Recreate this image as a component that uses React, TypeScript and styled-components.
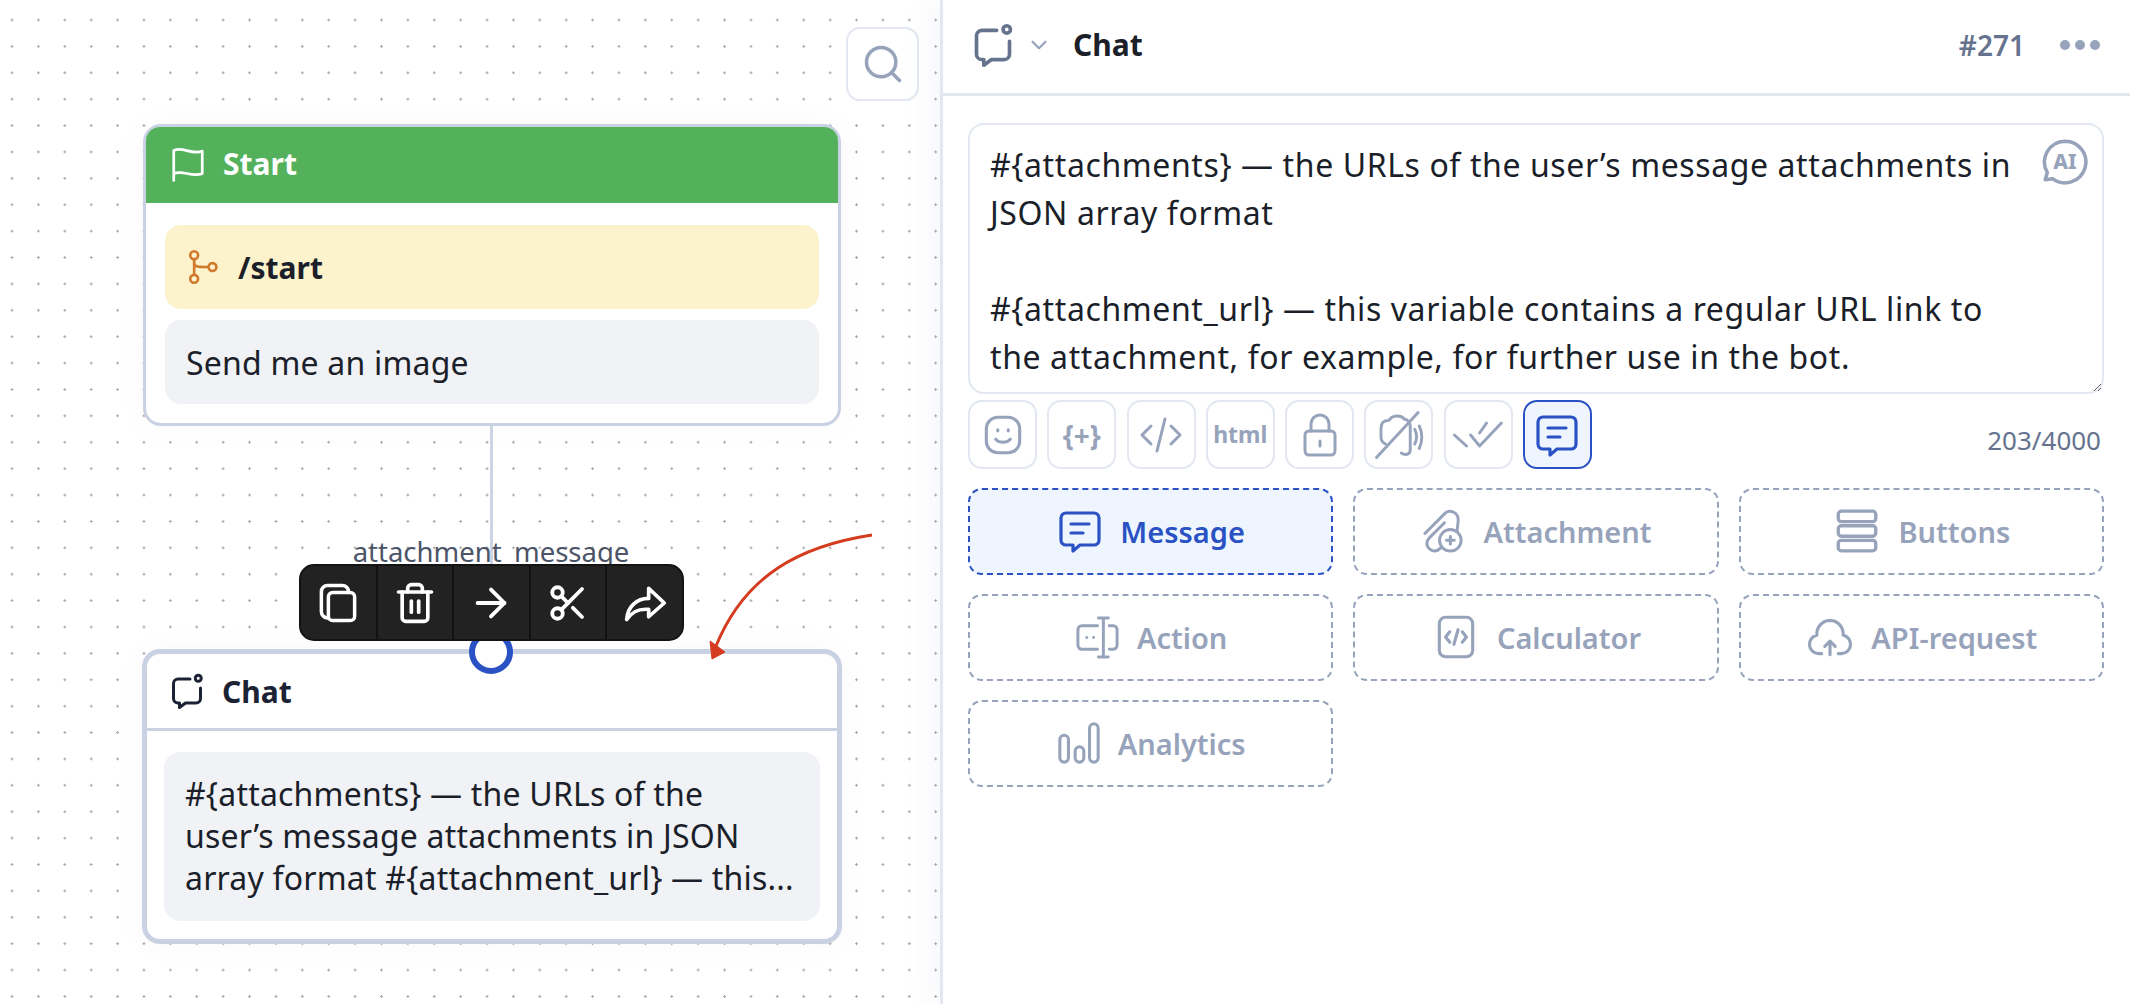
import React from "react";
import styled, { createGlobalStyle } from "styled-components";
import { ArrowRight, ChevronDown, Scissors, Search, Trash2 } from "lucide-react";

const FONT = `"Noto Sans", "Open Sans", sans-serif`;

const GlobalStyle = createGlobalStyle`
  html, body {
    margin: 0;
    padding: 0;
    background: #fff;
    font-family: ${FONT};
    color: #1b1f2a;
  }
  * {
    box-sizing: border-box;
  }
`;

const Page = styled.div`
  display: flex;
  width: 100%;
  height: 100vh;
  overflow: hidden;
`;

const Canvas = styled.div`
  position: relative;
  flex: 0 0 940px;
  height: 100%;
  background-color: #fff;
  background-image: radial-gradient(circle, #a9a9a9 1px, transparent 1.4px);
  background-size: 26.4px 26.4px;
  background-position: -1.2px 6.8px;
`;

const SearchButton = styled.div`
  position: absolute;
  left: 846px;
  top: 27px;
  width: 73px;
  height: 74px;
  display: flex;
  align-items: center;
  justify-content: center;
  background: #fff;
  border: 2px solid #e2e7f1;
  border-radius: 14px;
  color: #97a3bb;
`;

const Node = styled.div<{ $x: number; $y: number; $w: number; $h: number; $border: number }>`
  position: absolute;
  left: ${(p) => p.$x}px;
  top: ${(p) => p.$y}px;
  width: ${(p) => p.$w}px;
  height: ${(p) => p.$h}px;
  display: flex;
  flex-direction: column;
  background: #fff;
  border: ${(p) => p.$border}px solid #c8d2e2;
  border-radius: 18px;
  box-shadow: 0 0 30px rgba(90, 110, 150, 0.04);
`;

const StartHeader = styled.div`
  flex: 0 0 76px;
  display: flex;
  align-items: center;
  gap: 17px;
  padding: 0 24px 3px;
  background: #54b15b;
  border-radius: 14px 14px 0 0;
  color: #fff;
  font-size: 30px;
  font-weight: 700;
`;

const NodeBody = styled.div<{ $pad: string }>`
  display: flex;
  flex-direction: column;
  gap: 11px;
  padding: ${(p) => p.$pad};
`;

const Block = styled.div<{ $tone: "yellow" | "gray" }>`
  display: flex;
  align-items: center;
  gap: 20px;
  height: 84px;
  padding: 0 21px;
  border-radius: 16px;
  font-size: ${(p) => (p.$tone === "yellow" ? 30 : 32)}px;
  letter-spacing: ${(p) => (p.$tone === "yellow" ? 0 : 0.2)}px;
  font-weight: ${(p) => (p.$tone === "yellow" ? 700 : 400)};
  background: ${(p) => (p.$tone === "yellow" ? "#fcf2cb" : "#f0f2f6")};
`;

const ChatHeader = styled.div`
  flex: 0 0 77px;
  display: flex;
  align-items: center;
  gap: 17px;
  padding: 0 22px;
  border-bottom: 3px solid #c8d2e2;
  font-size: 30px;
  font-weight: 700;
  color: #1b2233;
`;

const PreviewBox = styled.div`
  height: 169px;
  padding: 21px 21px;
  border-radius: 16px;
  background: #f0f2f6;
  font-size: 32px;
  line-height: 42px;
  letter-spacing: 0.2px;
  font-weight: 400;
`;

const Connector = styled.div`
  position: absolute;
  left: 490px;
  top: 426px;
  width: 3px;
  height: 140px;
  background: #ccd5e5;
`;

const EdgeLabel = styled.div`
  position: absolute;
  left: 341px;
  top: 534px;
  width: 300px;
  text-align: center;
  font-size: 27.5px;
  line-height: 36px;
  color: #4b5567;
`;

const FloatBar = styled.div`
  position: absolute;
  left: 299px;
  top: 564px;
  width: 385px;
  height: 77px;
  display: flex;
  background: #222;
  border: 2px solid #141414;
  border-radius: 15px;
  z-index: 2;
`;

const FloatButton = styled.div`
  flex: 1;
  display: flex;
  align-items: center;
  justify-content: center;
  color: #fff;
  & + & {
    border-left: 2px solid #111;
  }
`;

const Port = styled.div`
  position: absolute;
  left: 469px;
  top: 630px;
  width: 44px;
  height: 44px;
  border: 6px solid #2a52c4;
  border-radius: 50%;
  background: #fff;
  z-index: 1;
`;

const RedArrow = styled.svg`
  position: absolute;
  left: 700px;
  top: 530px;
`;

const Panel = styled.div`
  flex: 1;
  display: flex;
  flex-direction: column;
  height: 100%;
  background: #fff;
  border-left: 3px solid #e2e7f1;
  box-shadow: -14px 0 24px rgba(120, 140, 180, 0.05);
  z-index: 3;
`;

const PanelHeader = styled.div`
  flex: 0 0 96px;
  display: flex;
  align-items: center;
  padding: 0 29px 4px 28px;
  border-bottom: 3px solid #e2e7f1;
  color: #66738f;
`;

const PanelTitle = styled.div`
  margin-left: 21px;
  font-size: 30px;
  font-weight: 700;
  color: #1b1f2a;
`;

const ChevronWrap = styled.div`
  display: flex;
  margin-left: 11px;
  color: #97a3bb;
`;

const HeaderId = styled.div`
  margin-left: auto;
  font-size: 28px;
  font-weight: 600;
  color: #66738f;
`;

const HeaderMenu = styled.div`
  display: flex;
  margin-left: 34px;
  color: #97a3bb;
`;

const PanelBody = styled.div`
  display: flex;
  flex-direction: column;
  padding: 27px 26px 0 25px;
`;

const EditorWrap = styled.div`
  position: relative;
  display: flex;
`;

const Editor = styled.textarea`
  width: 100%;
  height: 271px;
  padding: 16px 20px;
  border: 2px solid #e2e7f1;
  border-radius: 16px;
  outline: none;
  overflow: hidden;
  resize: vertical;
  font-family: ${FONT};
  font-size: 32px;
  line-height: 48px;
  letter-spacing: 0.6px;
  color: #1b1f2a;
  background: #fff;
`;

const AiBadge = styled.div`
  position: absolute;
  top: 14px;
  right: 14px;
  display: flex;
  color: #97a3bb;
`;

const ToolRow = styled.div`
  display: flex;
  align-items: center;
  gap: 10.25px;
  margin-top: 6px;
`;

const ToolButton = styled.div<{ $active?: boolean }>`
  width: 69px;
  height: 69px;
  display: flex;
  align-items: center;
  justify-content: center;
  border: 2px solid ${(p) => (p.$active ? "#2a52c4" : "#e2e7f1")};
  border-radius: 14px;
  background: ${(p) => (p.$active ? "#eef5fe" : "#fff")};
  color: ${(p) => (p.$active ? "#2a52c4" : "#97a3bb")};
`;

const ToolText = styled.span<{ $size: number }>`
  font-size: ${(p) => p.$size}px;
  font-weight: 700;
  line-height: 1;
`;

const Counter = styled.div`
  margin-left: auto;
  padding: 10px 3px 0 0;
  font-size: 26px;
  color: #66738f;
`;

const ActionGrid = styled.div`
  display: grid;
  grid-template-columns: repeat(3, 1fr);
  grid-auto-rows: 87px;
  column-gap: 20px;
  row-gap: 19px;
  margin-top: 19px;
`;

const ActionCard = styled.div<{ $active?: boolean }>`
  display: flex;
  align-items: center;
  justify-content: center;
  gap: 16px;
  padding-bottom: 1px;
  border: 2px dashed ${(p) => (p.$active ? "#2a52c4" : "#97a3bb")};
  border-radius: 14px;
  background: ${(p) => (p.$active ? "#eef5fe" : "#fff")};
  color: ${(p) => (p.$active ? "#2a52c4" : "#97a3bb")};
  font-size: 29px;
  font-weight: 600;
`;

type IconProps = { size?: number; stroke?: number; children: React.ReactNode };

const Svg = ({ size = 24, stroke = 2, children }: IconProps) => (
  <svg
    width={size}
    height={size}
    viewBox="0 0 24 24"
    fill="none"
    stroke="currentColor"
    strokeWidth={stroke}
    strokeLinecap="round"
    strokeLinejoin="round"
  >
    {children}
  </svg>
);

const ChatIcon = ({ size = 36 }: { size?: number }) => (
  <Svg size={size} stroke={2}>
    <circle cx="19.5" cy="3.5" r="2" />
    <path d="M14 4H6a3 3 0 0 0-3 3v10a3 3 0 0 0 3 3h1v3l4-3h7a3 3 0 0 0 3-3v-7" />
  </Svg>
);

const FlagIcon = () => (
  <Svg size={36} stroke={1.8}>
    <path d="M2.5 23V3c6-3 11 3 19 .5v15c-8 2.5-13-3-19 0" />
  </Svg>
);

const BranchIcon = () => (
  <svg width="32" height="34" viewBox="0 0 24 26" fill="none" stroke="#d07a2c" strokeWidth="2">
    <circle cx="6" cy="4" r="3" />
    <circle cx="6" cy="22" r="3" />
    <circle cx="20" cy="13" r="3" />
    <path d="M6 7v12M6 10c0 3 3 3 11 3" />
  </svg>
);

const CopyIcon = () => (
  <Svg size={42} stroke={2}>
    <rect x="6.5" y="6" width="15" height="16" rx="2.5" />
    <path d="M6.5 20.5a3.500 3.500 0 0 1-4-3.500V5.500a3.500 3.500 0 0 1 3.500-3.500h8.500a3.500 3.500 0 0 1 3.500 3.500V6" />
  </Svg>
);

const ForwardIcon = () => (
  <Svg size={44} stroke={2}>
    <path d="M14 4l8.500 8-8.500 7.500V15.500C9 15 5 16.500 2 21c.5-7 5.500-11.500 12-11.500z" />
  </Svg>
);

const DotsIcon = () => (
  <svg width="42" height="12" viewBox="0 0 42 12" fill="currentColor">
    <circle cx="6" cy="6" r="5" />
    <circle cx="21" cy="6" r="5" />
    <circle cx="36" cy="6" r="5" />
  </svg>
);

const SmileIcon = () => (
  <Svg size={50} stroke={1.5}>
    <rect x="4" y="3.5" width="16" height="17" rx="5.5" />
    <path d="M8.500 14c1.500 2 5.500 2 7 0M9.500 9.500v.5M14.500 9.500v.5" />
  </Svg>
);

const CodeIcon = () => (
  <Svg size={48} stroke={1.5}>
    <path d="M7 7.500 2.500 12 7 16.500M17 7.500l4.500 4.500-4.500 4.500M14 4 10 20" />
  </Svg>
);

const LockIcon = () => (
  <Svg size={48} stroke={1.5}>
    <rect x="4.5" y="10" width="15" height="12" rx="2" />
    <path d="M7.500 10V6.500a4.500 4.500 0 0 1 9 0V10M12 15v2.500" />
  </Svg>
);

const MuteIcon = () => (
  <Svg size={54} stroke={1.3}>
    <path d="M4 9c0-3 2-3.500 3.500-3.500C9 3 13 3 14.500 5c1.500 0 2.500 1.500 2.500 3.500v10c0 2.500-2.500 2.500-4 1.500M4 9v4c0 1.500 1 2.500 2 3" />
    <path d="M19 9.500c1 2 1 4.500 0 6.500M21 8c1.500 3 1.500 7 0 10" />
    <path d="M2 22 20.500 2" />
  </Svg>
);

const DoubleCheckIcon = () => (
  <Svg size={54} stroke={1.3}>
    <path d="m1.500 12 5.400 4.900M8.700 12l4 4.900 9.700-10.200M12.700 11.100l3.100-4.400" />
  </Svg>
);

const MessageIcon = () => (
  <Svg size={48} stroke={1.6}>
    <path d="M5 3h14a2.500 2.500 0 0 1 2.500 2.500v11A2.500 2.500 0 0 1 19 19h-7l-3.500 3v-3H5a2.500 2.500 0 0 1-2.500-2.500v-11A2.500 2.500 0 0 1 5 3z" />
    <path d="M7.500 8.500h9M7.500 13h6" />
  </Svg>
);

const AttachIcon = () => (
  <Svg size={47} stroke={1.5}>
    <path d="M2.500 13 13 2.500c2.500-2 6.500 0 6.500 3.500 0 2-.5 4-.5 6" />
    <path d="M12.500 7.500 5 15c-2 2-2 4.500 0 6 2 1.500 4 1 5.500-.5" />
    <circle cx="15.5" cy="16.5" r="5.5" />
    <path d="M15.500 14.500v4M13.500 16.500h4" />
  </Svg>
);

const ButtonsIcon = () => (
  <Svg size={50} stroke={1.6}>
    <rect x="3" y="2.5" width="18" height="5" rx="1.5" />
    <rect x="3" y="9.5" width="18" height="5" rx="1.5" />
    <rect x="3" y="16.5" width="18" height="5" rx="1.5" />
  </Svg>
);

const ActionIcon = () => (
  <Svg size={47} stroke={1.5}>
    <path d="M12 6H4a2 2 0 0 0-2 2v8a2 2 0 0 0 2 2h8M18 6h2a2 2 0 0 1 2 2v8a2 2 0 0 1-2 2h-2" />
    <path d="M15 2v20M12.500 2h5M12.500 22h5M6.500 12h.01M10 12h.01" />
  </Svg>
);

const CalcIcon = () => (
  <Svg size={50} stroke={1.5}>
    <rect x="4" y="2.5" width="16" height="19" rx="3" />
    <path d="M9 9.500 7 12l2 2.500M15 9.500l2 2.500-2 2.500M13 8.500l-2 7" />
  </Svg>
);

const CloudIcon = () => (
  <Svg size={50} stroke={1.5}>
    <path d="M8 20H6.500a4.500 4.500 0 0 1-.8-8.900A6.500 6.500 0 0 1 12 4a6.500 6.500 0 0 1 6.300 7.100A4.500 4.500 0 0 1 17.500 20H16" />
    <path d="M12 20.500v-6M9.500 16.500l2.500-2.500 2.500 2.500" />
  </Svg>
);

const BarsIcon = () => (
  <Svg size={46} stroke={1.6}>
    <rect x="2" y="8" width="4.5" height="14" rx="2.25" />
    <rect x="10" y="14" width="4.5" height="8" rx="2.25" />
    <rect x="17.5" y="2" width="4.5" height="20" rx="2.25" />
  </Svg>
);

const AiGlyph = styled.text`
  font-family: ${FONT};
  font-size: 10px;
  font-weight: 800;
  fill: currentColor;
  stroke: none;
`;

const AiIcon = () => (
  <Svg size={50} stroke={1.7}>
    <path d="M12 2a10 10 0 1 1-6 18l-3.500 .5L3.500 17A10 10 0 0 1 12 2z" />
    <AiGlyph x="12" y="15.5" textAnchor="middle">AI</AiGlyph>
  </Svg>
);

const ACTIONS: { label: string; icon: React.ReactNode; active?: boolean }[] = [
  { label: "Message", icon: <MessageIcon />, active: true },
  { label: "Attachment", icon: <AttachIcon /> },
  { label: "Buttons", icon: <ButtonsIcon /> },
  { label: "Action", icon: <ActionIcon /> },
  { label: "Calculator", icon: <CalcIcon /> },
  { label: "API-request", icon: <CloudIcon /> },
  { label: "Analytics", icon: <BarsIcon /> },
];

const MESSAGE =
  "#{attachments} — the URLs of the user’s message attachments in\nJSON array format\n\n#{attachment_url} — this variable contains a regular URL link to\nthe attachment, for example, for further use in the bot.";

const PREVIEW =
  "#{attachments} — the URLs of the user’s message attachments in JSON array format #{attachment_url} — this...";

export default function App() {
  return (
    <Page>
      <GlobalStyle />
      <Canvas>
        <SearchButton>
          <Search size={44} strokeWidth={1.9} />
        </SearchButton>

        <Node $x={143} $y={124} $w={698} $h={302} $border={3}>
          <StartHeader>
            <FlagIcon />
            Start
          </StartHeader>
          <NodeBody $pad="22px 19px">
            <Block $tone="yellow">
              <BranchIcon />
              /start
            </Block>
            <Block $tone="gray">Send me an image</Block>
          </NodeBody>
        </Node>

        <Connector />
        <EdgeLabel>attachment_message</EdgeLabel>

        <Node $x={142} $y={649} $w={700} $h={295} $border={5}>
          <ChatHeader>
            <ChatIcon />
            Chat
          </ChatHeader>
          <NodeBody $pad="21px 17px">
            <PreviewBox>{PREVIEW}</PreviewBox>
          </NodeBody>
        </Node>

        <Port />
        <FloatBar>
          <FloatButton><CopyIcon /></FloatButton>
          <FloatButton><Trash2 size={44} strokeWidth={2} /></FloatButton>
          <FloatButton><ArrowRight size={46} strokeWidth={2} /></FloatButton>
          <FloatButton><Scissors size={42} strokeWidth={2.2} /></FloatButton>
          <FloatButton><ForwardIcon /></FloatButton>
        </FloatBar>

        <RedArrow width="180" height="135" viewBox="700 530 180 135" fill="none">
          <path d="M872 535C800 546 745 575 716 646" stroke="#d53b1e" strokeWidth="3" />
          <path d="M712 659 710 641 725 652z" fill="#d53b1e" stroke="#d53b1e" strokeWidth="1" />
        </RedArrow>
      </Canvas>

      <Panel>
        <PanelHeader>
          <ChatIcon size={44} />
          <ChevronWrap>
            <ChevronDown size={26} strokeWidth={2} />
          </ChevronWrap>
          <PanelTitle>Chat</PanelTitle>
          <HeaderId>#271</HeaderId>
          <HeaderMenu>
            <DotsIcon />
          </HeaderMenu>
        </PanelHeader>

        <PanelBody>
          <EditorWrap>
            <Editor defaultValue={MESSAGE} spellCheck={false} />
            <AiBadge><AiIcon /></AiBadge>
          </EditorWrap>

          <ToolRow>
            <ToolButton><SmileIcon /></ToolButton>
            <ToolButton><ToolText $size={28}>{"{+}"}</ToolText></ToolButton>
            <ToolButton><CodeIcon /></ToolButton>
            <ToolButton><ToolText $size={23}>html</ToolText></ToolButton>
            <ToolButton><LockIcon /></ToolButton>
            <ToolButton><MuteIcon /></ToolButton>
            <ToolButton><DoubleCheckIcon /></ToolButton>
            <ToolButton $active><MessageIcon /></ToolButton>
            <Counter>203/4000</Counter>
          </ToolRow>

          <ActionGrid>
            {ACTIONS.map((a) => (
              <ActionCard key={a.label} $active={a.active}>
                {a.icon}
                {a.label}
              </ActionCard>
            ))}
          </ActionGrid>
        </PanelBody>
      </Panel>
    </Page>
  );
}
